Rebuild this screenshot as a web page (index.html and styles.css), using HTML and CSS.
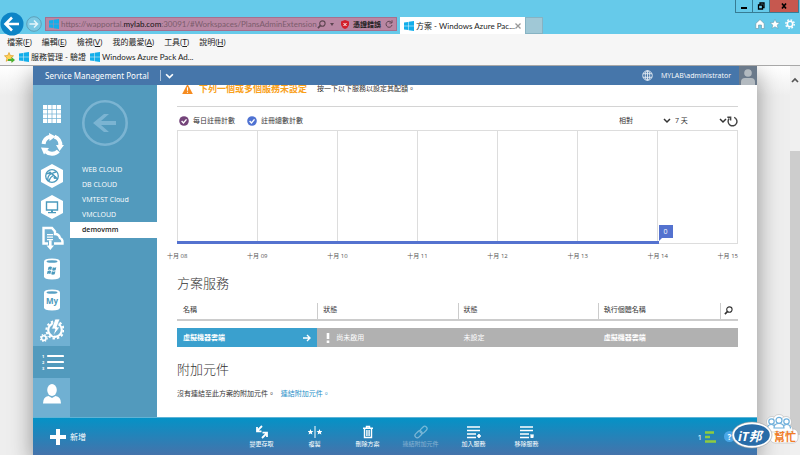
FILE: index.html
```html
<!DOCTYPE html>
<html lang="zh-Hant">

<head>
    <meta charset="UTF-8">
    <title>方案 - Windows Azure Pack</title>
    <link rel="stylesheet" href="styles.css">
</head>

<body>
    <svg class="defs" aria-hidden="true">
        <symbol id="win" viewBox="0 0 20 20">
            <path fill="#12aeea" d="M0 3l8.500-1.200v7.700H0zM9.500 1.600L20 0v9.500H9.500zM0 10.500h8.500v7.700L0 17zM9.500 10.500H20V20L9.500 18.400z" />
        </symbol>
        <symbol id="chevron" viewBox="0 0 8 6">
            <path d="M1 1l3 3 3-3" fill="none" stroke="currentColor" stroke-width="1.500" />
        </symbol>
        <symbol id="search" viewBox="0 0 10 10">
            <circle cx="6" cy="4" r="3" fill="none" stroke="currentColor" stroke-width="1.200" />
            <path d="M4 6L1 9" stroke="currentColor" stroke-width="1.800" />
        </symbol>
    </svg>

    <header class="browser">
        <div class="titlebar">
            <button class="round back" aria-label="上一頁">
                <svg viewBox="0 0 24 24"><circle cx="12" cy="12" r="11.500" fill="#0c84c6" /><path d="M19 12H6M12 5.500L5.500 12l6.500 6.500" fill="none" stroke="#fff" stroke-width="2.600" /></svg>
            </button>
            <button class="round forward" aria-label="下一頁">
                <svg viewBox="0 0 16 16"><circle cx="8" cy="8" r="7.300" fill="#7bc9e4" stroke="#5d9fb8" /><path d="M3.500 8h8M8 4.500L11.500 8 8 11.500" fill="none" stroke="#e6f6fb" stroke-width="1.500" /></svg>
            </button>
            <div class="address">
                <svg class="logo"><use href="#win" /></svg>
                <div class="url" role="textbox" contenteditable="true" aria-label="網址">https://wapportal.<span class="domain">mylab.com</span>:30091/#Workspaces/PlansAdminExtension</div>
                <svg class="find"><use href="#search" /></svg>
                <svg class="caret" viewBox="0 0 4 3"><path d="M0 0h4L2 3z" fill="#5e4552" /></svg>
                <svg class="shield" viewBox="0 0 8 9"><path d="M4 0l4 1.500V5Q7 8 4 9 1 8 0 5V1.500z" fill="#d3202c" /><path d="M2.500 3l3 3M5.500 3l-3 3" stroke="#fff" /></svg>
                <span class="cert">憑證錯誤</span>
                <svg class="reload" viewBox="0 0 8 8"><path d="M6.500 2.500A3 3 0 1 0 7 5M7 .3v2.700H4.300" fill="none" stroke="#5e4552" /></svg>
            </div>
            <div class="tab">
                <svg class="logo"><use href="#win" /></svg>
                <span class="tab-title">方案 - Windows Azure Pac...</span>
                <button class="tab-close" aria-label="關閉索引標籤">
                    <svg viewBox="0 0 6 6"><path d="M.5.5l5 5M5.500.5l-5 5" stroke="#999" stroke-width="1.300" /></svg>
                </button>
            </div>
            <button class="new-tab" aria-label="新索引標籤"></button>
            <div class="window-side">
                <div class="window-controls">
                    <button class="minimize" aria-label="最小化"><svg viewBox="0 0 8 8"><path d="M1 5h6v2H1z" /></svg></button>
                    <button class="restore" aria-label="還原"><svg viewBox="0 0 8 8"><path d="M3 2.500V1h4v4.500H6M1.500 3h4v4h-4z" fill="none" stroke="#000" stroke-width="1.300" /></svg></button>
                    <button class="close" aria-label="關閉"><svg viewBox="0 0 8 8"><path d="M2 1.500l4 5M6 1.500l-4 5" stroke="#000" stroke-width="1.600" /></svg></button>
                </div>
                <div class="browser-tools">
                    <button aria-label="首頁"><svg viewBox="0 0 10 10"><path d="M5 .5L.8 4.500V9.500h2.700V6h3v3.500h2.700v-5z" fill="#fff" stroke="#6694a4" stroke-width=".6" /></svg></button>
                    <button aria-label="我的最愛"><svg viewBox="0 0 10 10"><path d="M5 .2l1.400 3.200 3.400.3-2.600 2.300.8 3.500L5 7.700 2 9.500l.8-3.500L.2 3.700l3.400-.3z" fill="#fff" stroke="#6694a4" stroke-width=".5" /></svg></button>
                    <button aria-label="工具"><svg viewBox="0 0 10 10"><circle cx="5" cy="5" r="4.200" fill="none" stroke="#fff" stroke-width="1.400" stroke-dasharray="1.700 1.600" /><circle cx="5" cy="5" r="2.700" fill="none" stroke="#fff" stroke-width="1.600" /></svg></button>
                </div>
            </div>
        </div>
        <nav class="menu">
            <a href="#">檔案(<u>F</u>)</a>
            <a href="#">編輯(<u>E</u>)</a>
            <a href="#">檢視(<u>V</u>)</a>
            <a href="#">我的最愛(<u>A</u>)</a>
            <a href="#">工具(<u>T</u>)</a>
            <a href="#">說明(<u>H</u>)</a>
        </nav>
        <nav class="favorites">
            <button class="add-favorite" aria-label="加到我的最愛列">
                <svg viewBox="0 0 11 11"><path d="M5 .5l1.300 3 3.200.3L7 6l.8 3.300L5 7.600 2.200 9.300 3 6 .5 3.800l3.200-.3z" fill="#ffd257" stroke="#dc9b23" stroke-width=".7" /><path d="M4 7h3.500V5L11 8l-3.500 3V9H4z" fill="#4bb233" /></svg>
            </button>
            <a href="#"><svg class="logo"><use href="#win" /></svg>服務管理 - 驗證</a>
            <a href="#"><svg class="logo"><use href="#win" /></svg>Windows Azure Pack Ad...</a>
        </nav>
    </header>

    <div class="viewport">
        <div class="page">
            <div class="portal">
                <header class="portal-header">
                    <h1>Service Management Portal</h1>
                    <button class="portal-menu" aria-label="展開"><svg><use href="#chevron" /></svg></button>
                    <button class="language" aria-label="語言">
                        <svg viewBox="0 0 11 11"><g fill="none" stroke="#e4ecf4" stroke-width=".9"><circle cx="5.500" cy="5.500" r="4.800" /><ellipse cx="5.500" cy="5.500" rx="2.200" ry="4.800" /><path d="M5.500.7v9.600M1 3.700h9M1 7.300h9" /></g></svg>
                    </button>
                    <span class="user">MYLAB\administrator</span>
                    <svg class="avatar" viewBox="0 0 18 19"><path fill="#6b7a8b" d="M0 0h18v19H0z" /><circle cx="9" cy="7" r="3.800" fill="#b3bac0" /><path d="M2 19v-3q0-4 4-4h6q4 0 4 4v3z" fill="#b3bac0" /></svg>
                </header>

                <div class="portal-body">
                    <nav class="services">
                        <a href="#" aria-label="所有項目"><svg viewBox="0 0 24 24"><path d="M3 3h18v18H3z" fill="#fff" /><path d="M7.500 3v18M12 3v18M16.500 3v18M3 7.500h18M3 12h18M3 16.500h18" stroke="#70b0d2" stroke-width=".7" /></svg></a>
                        <a href="#" aria-label="雲端"><svg viewBox="0 0 24 24"><g fill="none" stroke="#fff" stroke-width="4"><path d="M3.600 11A8.600 8.600 0 0 1 10 3.600" /><path d="M14.500 3.700A8.600 8.600 0 0 1 20.300 13" /><path d="M18.300 18A8.600 8.600 0 0 1 6 18.500" /></g><path d="M9 0l6.500 3.600L9.500 8zM16 12h8l-4.500 6zM1 14.500l8 .5-5 6.500z" fill="#fff" /></svg></a>
                        <a href="#" aria-label="網站"><svg viewBox="0 0 24 24"><path d="M12 0l11 6v12l-11 6L1 18V6z" fill="#fff" /><g fill="none" stroke="#4b9abd" stroke-width="1.300"><circle cx="12" cy="12" r="6.300" /><path d="M6 10q5-2 8 1.500T18 15M8 17q-1-5 3-7t5-2M14 11q-4 2-5 6" /></g><circle cx="10" cy="9" r="1.500" fill="#4b9abd" /><circle cx="15" cy="13.500" r="1.500" fill="#4b9abd" /></svg></a>
                        <a href="#" aria-label="虛擬機器"><svg viewBox="0 0 24 24"><path d="M12 0l11 6v12l-11 6L1 18V6z" fill="#fff" /><path d="M6.500 7h11v8h-11z" fill="none" stroke="#4b9abd" stroke-width="1.400" /><path d="M11 15h2v2h3v1.200H8V17h3z" fill="#4b9abd" /></svg></a>
                        <a href="#" aria-label="自動化"><svg viewBox="0 0 24 24"><path d="M8 17.500H3.500V2H12l3 3.500V8q4 0 5 4 2.500 1 2.500 4v1.500H14" fill="none" stroke="#fff" stroke-width="2.400" /><path d="M7 8h6v1.300H7zM7 10.500h6v1.300H7zM7 13h6v1.300H7zM9 14.500h2.600v5H14L10.300 24l-3.800-4.500H9z" fill="#fff" /></svg></a>
                        <a href="#" aria-label="SQL Server"><svg viewBox="0 0 24 24"><path d="M4 4.500q0-3 8-3t8 3v15q0 3-8 3t-8-3z" fill="#fff" /><ellipse cx="12" cy="4.500" rx="5.500" ry="1.300" fill="#57a0c4" /><path d="M8.500 10q2-1.200 3.500 0l-.7 3q-1.800-1-3.500 0zM12.800 10.300q1.600.8 3.500 0l-.7 3q-1.900.8-3.500 0zM7.600 14q2-1.200 3.500 0l-.7 3q-1.800-1-3.500 0zM11.900 14.300q1.600.8 3.500 0l-.7 3q-1.900.8-3.500 0z" fill="#4b9abd" /></svg></a>
                        <a href="#" aria-label="MySQL"><svg viewBox="0 0 24 24"><path d="M4 4.500q0-3 8-3t8 3v15q0 3-8 3t-8-3z" fill="#fff" /><ellipse cx="12" cy="4.500" rx="5.500" ry="1.300" fill="#57a0c4" /><text x="12" y="16" class="mysql">My</text></svg></a>
                        <a href="#" aria-label="作業"><svg viewBox="0 0 24 24"><g fill="none" stroke="#fff"><circle cx="15" cy="11" r="6.800" stroke-width="2.200" /><circle cx="15" cy="11" r="8.600" stroke-width="2" stroke-dasharray="2.400 2.100" /><circle cx="3.800" cy="19" r="2.300" stroke-width="1.600" /><circle cx="3.800" cy="19" r="3.400" stroke-width="1.200" stroke-dasharray="1.500 1.200" /></g><path d="M15 0h5l-3 8h3l-7 9 2-7h-3.500z" fill="#fff" stroke="#70b0d2" stroke-width=".8" /></svg></a>
                        <a href="#" class="active" aria-label="方案"><svg viewBox="0 0 24 24"><path d="M8 6h15M8 12h15M8 18h15" stroke="#fff" stroke-width="2.200" stroke-linecap="round" /><g class="digits"><text x="2" y="8">1</text><text x="2" y="14">2</text><text x="2" y="20">3</text></g></svg></a>
                        <a href="#" aria-label="使用者帳戶"><svg viewBox="0 0 24 24"><ellipse cx="12" cy="8" rx="4.800" ry="6" fill="#fff" /><path d="M3 21.500q0-7 5.500-7.500l3.500 2 3.500-2q5.500.5 5.500 7.500z" fill="#fff" /></svg></a>
                    </nav>

                    <nav class="plans">
                        <button class="plans-back" aria-label="返回">
                            <svg viewBox="0 0 46 46"><circle cx="23" cy="23" r="21.700" fill="none" stroke="currentColor" stroke-width="2.600" /><path d="M11 23l11-9h5l-8 7h15v4H19l8 7h-5z" fill="currentColor" /></svg>
                        </button>
                        <a href="#">WEB CLOUD</a>
                        <a href="#">DB CLOUD</a>
                        <a href="#">VMTEST Cloud</a>
                        <a href="#">VMCLOUD</a>
                        <a href="#" class="active">demovmm</a>
                    </nav>

                    <main class="content">
                        <div class="warning">
                            <svg viewBox="0 0 12 12"><path d="M6 .5L11.800 11.500H.2z" fill="#f68b1f" /><path d="M5.400 4h1.200v4H5.400zM5.400 9h1.200v1.200H5.400z" fill="#fff" /></svg>
                            <strong>下列一個或多個服務未設定</strong>
                            <span>按一下以下服務以設定其配額。</span>
                        </div>

                        <div class="chart-bar">
                            <button class="legend daily"><svg viewBox="0 0 10 10"><circle cx="5" cy="5" r="4.800" fill="currentColor" /><path d="M2.600 5l1.900 2 3-3.600" fill="none" stroke="#fff" stroke-width="1.400" /></svg><span>每日註冊計數</span></button>
                            <button class="legend total"><svg viewBox="0 0 10 10"><circle cx="5" cy="5" r="4.800" fill="currentColor" /><path d="M2.600 5l1.900 2 3-3.600" fill="none" stroke="#fff" stroke-width="1.400" /></svg><span>註冊總數計數</span></button>
                            <div class="chart-options">
                                <label class="picker"><select aria-label="刻度"><option>相對</option></select><svg><use href="#chevron" /></svg></label>
                                <label class="picker"><select aria-label="期間"><option>7 天</option></select><svg><use href="#chevron" /></svg></label>
                                <button class="refresh" aria-label="重新整理"><svg viewBox="0 0 10 10"><path d="M6.500 1.200A4 4 0 1 1 2 2.300M.3 1.200h3v3" fill="none" stroke="#444" stroke-width="1.300" /></svg></button>
                            </div>
                        </div>

                        <div class="chart">
                            <i></i><i></i><i></i><i></i><i></i><i></i><i></i>
                            <div class="series"><span class="value">0</span></div>
                        </div>
                        <div class="axis">
                            <span>十月 08</span><span>十月 09</span><span>十月 10</span><span>十月 11</span><span>十月 12</span><span>十月 13</span><span>十月 14</span><span>十月 15</span>
                        </div>

                        <h2>方案服務</h2>
                        <table>
                            <thead>
                                <tr>
                                    <th>名稱</th>
                                    <th>狀態</th>
                                    <th>狀態</th>
                                    <th>執行個體名稱</th>
                                    <th class="search-cell"><button aria-label="搜尋"><svg><use href="#search" /></svg></button></th>
                                </tr>
                            </thead>
                            <tbody>
                                <tr>
                                    <td class="name"><a href="#">虛擬機器雲端<svg viewBox="0 0 8 8"><path d="M0 4h7M4 1l3 3-3 3" fill="none" stroke="#fff" stroke-width="1.400" /></svg></a></td>
                                    <td><span class="state"><svg viewBox="0 0 4 10"><path d="M.7 0h2.600v6H.7zM.7 7.500h2.600V10H.7z" fill="#fff" /></svg>尚未啟用</span></td>
                                    <td>未設定</td>
                                    <td colspan="2" class="instance">虛擬機器雲端</td>
                                </tr>
                            </tbody>
                        </table>

                        <h2>附加元件</h2>
                        <p>沒有連結至此方案的附加元件。 <a href="#">連結附加元件。</a></p>
                    </main>
                </div>

                <footer class="commands">
                    <button class="new"><svg viewBox="0 0 16 16"><path d="M6 0h4v6h6v4h-6v6H6v-6H0V6h6z" fill="#fff" /></svg>新增</button>
                    <div class="actions">
                        <button><svg viewBox="0 0 14 14"><path d="M1.500 1.500L6 6M6.500 2v4.500H2M12.500 12.500L8 8" fill="none" stroke="none" /><path d="M7 1L2 6M2 2v4.300h4.500M7 13l5-5M12 12V7.700H7.500" fill="none" stroke="#fff" stroke-width="1.800" /></svg>變更存取</button>
                        <button><svg viewBox="0 0 14 14"><path d="M7 1v12" stroke="#fff" /><path d="M2.500 4l.8 2 2.200.1-1.700 1.400.6 2.100-1.900-1.200L.6 9.600l.6-2.100L-.5 6.100 1.700 6zM11.500 4l.8 2 2.200.1-1.700 1.400.6 2.100-1.900-1.200-1.900 1.200.6-2.100-1.700-1.400 2.200-.1z" fill="#fff" /></svg>複製</button>
                        <button><svg viewBox="0 0 14 14"><path d="M2 3.200h10M5.500 3V1.500h3V3M3.500 4v8.500h7V4M5.900 5v6M8.100 5v6" fill="none" stroke="#fff" stroke-width="1.400" /></svg>刪除方案</button>
                        <button disabled><svg viewBox="0 0 14 14"><g fill="none" stroke="#fff" stroke-width="1.300"><rect x="5.500" y="2.500" width="8" height="4.600" rx="2.300" transform="rotate(-45 9.500 4.800)" /><rect x=".5" y="7" width="8" height="4.600" rx="2.300" transform="rotate(-45 4.500 9.300)" /></g></svg>連結附加元件</button>
                        <button><svg viewBox="0 0 14 14"><path d="M0 2h13M0 5.500h13M0 9h9M0 12.500h9M12 9v4M10 11h4" stroke="#fff" stroke-width="1.700" /></svg>加入服務</button>
                        <button><svg viewBox="0 0 14 14"><path d="M0 2h13M0 5.500h13M0 9h9M0 12.500h9M10.500 9.500l3 3M13.500 9.500l-3 3" stroke="#fff" stroke-width="1.700" /></svg>移除服務</button>
                    </div>
                    <button class="progress">1<svg viewBox="0 0 12 12"><path d="M1 1.500h9M1 6h5M1 10.500h11" stroke="#8fcb3f" stroke-width="2.400" /></svg></button>
                    <button class="help" aria-label="說明">?</button>
                </footer>
            </div>
        </div>
        <div class="scrollbar">
            <svg viewBox="0 0 8 6"><path d="M1 5l3-3 3 3" fill="none" stroke="#555" stroke-width="1.700" /></svg>
            <div class="thumb"></div>
        </div>
    </div>

    <svg class="watermark" viewBox="0 0 68 36" role="img" aria-label="iT邦幫忙">
        <g stroke="#aaa" stroke-width=".5" fill="#fff"><rect x="38" y="15" width="28" height="14" rx="5" /><circle cx="40" cy="8" r="5.500" /><circle cx="47" cy="6.500" r="6" /><circle cx="54" cy="8" r="5.500" /><path d="M34 18q0-7 5-7h17q5 0 5 7z" /></g>
        <g fill="#fff" stroke="#6fb0dc" stroke-width="1.200"><circle cx="39.500" cy="7.500" r="2.700" /><circle cx="54.500" cy="7.500" r="2.700" /><path d="M35.500 14.500q0-4 4-4 3 0 3.500 3M51 13.500q.5-3 3.500-3 4 0 4 4" /><circle cx="47" cy="6.300" r="3" /><path d="M42 14q0-4.500 5-4.500t5 4.500z" /></g>
        <ellipse cx="20" cy="21" rx="20" ry="13" fill="#fff" stroke="#999" stroke-width=".6" />
        <ellipse cx="20" cy="21" rx="17.800" ry="10.800" fill="#286ca8" />
        <text x="6" y="27" class="mark-it">iT邦</text>
        <text x="42" y="27" class="mark-help">幫忙</text>
    </svg>
</body>

</html>
```
FILE: styles.css
```css
* {
    box-sizing: border-box;
}

body {
    margin: 0;
    height: 100vh;
    display: flex;
    flex-direction: column;
    overflow: hidden;
    font-family: "Open Sans", "Noto Sans CJK TC", sans-serif;
    font-size: 7px;
    line-height: 10px;
    color: #333;
}

button,
select {
    font: inherit;
    color: inherit;
    background: none;
    border: none;
    padding: 0;
    margin: 0;
    cursor: pointer;
}

a {
    color: inherit;
    text-decoration: none;
}

svg {
    display: block;
    flex: none;
}

.defs {
    display: none;
}

/* Browser */
.browser {
    flex: none;
    background: #f6f6f6;
    border-bottom: 1px solid #a8a8a8;
    font-family: Lato, "Noto Sans CJK TC", sans-serif;
    font-size: 8px;
    color: #222;
}

.titlebar {
    display: flex;
    align-items: flex-end;
    height: 34px;
    background: #66caea;
}

.round {
    flex: none;
    align-self: flex-end;
}

.back {
    width: 24px;
    height: 24px;
    margin-bottom: -2px;
}

.back svg {
    width: 24px;
    height: 24px;
}

.forward {
    width: 16px;
    height: 16px;
    margin: 0 3px 2px 2px;
}

.logo {
    width: 10px;
    height: 10px;
}

.address {
    display: flex;
    align-items: center;
    flex: 0 1 352px;
    height: 14px;
    margin-bottom: 3px;
    padding: 0 3px;
    background: #b987a3;
    border: 1px solid #a5708e;
}

.url {
    flex: 1;
    margin-left: 2px;
    white-space: nowrap;
    overflow: hidden;
    color: #7b5c6c;
}

.domain {
    color: #111;
}

.find {
    width: 9px;
    height: 9px;
    color: #5e4552;
}

.caret {
    width: 4px;
    height: 3px;
    margin: 0 7px 0 4px;
}

.shield {
    width: 8px;
    height: 9px;
}

.cert {
    margin: 0 4px;
    font-size: 7px;
    font-weight: bold;
}

.reload {
    width: 8px;
    height: 8px;
}

.tab {
    display: flex;
    align-items: center;
    flex: 0 1 124px;
    height: 17px;
    margin-left: 3px;
    padding: 0 4px;
    background: #fff;
}

.tab-title {
    flex: 1;
    margin-left: 2px;
    white-space: nowrap;
}

.tab-close svg {
    width: 6px;
    height: 6px;
}

.new-tab {
    width: 18px;
    height: 17px;
    background: #a0c8d6;
    border: 1px solid #86b3c3;
}

.window-side {
    display: flex;
    flex-direction: column;
    justify-content: space-between;
    align-items: flex-end;
    align-self: stretch;
    margin-left: auto;
    padding: 0 1px 5px 0;
}

.window-controls {
    display: flex;
    border: 1px solid #377c94;
    border-top: none;
}

.window-controls button {
    display: flex;
    justify-content: center;
    align-items: center;
    width: 17px;
    height: 12px;
    border-right: 1px solid #377c94;
}

.window-controls svg {
    width: 8px;
    height: 8px;
}

.window-controls .close {
    width: 28px;
    background: #c6584f;
    border: none;
}

.browser-tools {
    display: flex;
    gap: 5px;
    padding-right: 4px;
}

.browser-tools svg {
    width: 10px;
    height: 10px;
}

.menu,
.favorites {
    display: flex;
    align-items: center;
    height: 15px;
}

.menu {
    gap: 10px;
    padding-left: 7px;
}

.favorites {
    gap: 4px;
    height: 16px;
    padding-left: 4px;
}

.favorites a {
    display: flex;
    align-items: center;
    gap: 2px;
}

.add-favorite svg {
    width: 11px;
    height: 11px;
}

/* Page area */
.viewport {
    display: flex;
    flex: 1;
    min-height: 0;
    background: linear-gradient(#fff, #eee 30px);
}

.page {
    flex: 1;
    display: flex;
    padding: 0 33px;
    overflow: hidden;
}

.portal {
    flex: 1;
    display: flex;
    flex-direction: column;
    background: #fff;
    box-shadow: 0 8px 22px rgba(0, 0, 0, 0.4);
}

.scrollbar {
    width: 10px;
    display: flex;
    flex-direction: column;
    padding: 11px 0 20px;
    background: #f0f0f0;
}

.scrollbar svg {
    width: 8px;
    height: 6px;
    margin-left: 1px;
}

.thumb {
    flex: 1;
    margin-top: 68px;
    background: #cdcdcd;
}

.portal-header {
    display: flex;
    align-items: center;
    flex: none;
    height: 19px;
    padding-left: 12px;
    background: #4676aa;
    color: #fff;
}

.portal-header h1 {
    margin: 0;
    font-family: "Noto Sans", sans-serif;
    font-size: 8px;
    font-weight: normal;
}

.portal-menu {
    margin-left: 11px;
    padding: 3px 0 1px 4px;
    border-left: 1px solid #a9c0d9;
}

.portal-menu svg {
    width: 9px;
    height: 7px;
}

.language {
    margin-left: auto;
}

.language svg {
    width: 11px;
    height: 11px;
}

.user {
    margin: 0 8px;
}

.avatar {
    width: 18px;
    height: 19px;
}

.portal-body {
    flex: 1;
    display: flex;
    min-height: 0;
    overflow: hidden;
}

.services {
    flex: none;
    width: 37px;
    padding-top: 13px;
    background: #70b0d2;
}

.services a {
    display: flex;
    justify-content: center;
    align-items: center;
    height: 31px;
}

.services .active {
    height: 32px;
    background: #529abd;
}

.services svg {
    width: 24px;
    height: 24px;
}

.mysql {
    font-size: 8px;
    font-weight: bold;
    text-anchor: middle;
    fill: #4b9abd;
}

.digits {
    font-size: 4px;
    font-weight: bold;
    fill: #fff;
}

.plans {
    flex: none;
    display: flex;
    flex-direction: column;
    width: 87px;
    padding-top: 15px;
    background: #529abd;
    color: #fff;
}

.plans-back {
    align-self: flex-start;
    margin: 0 0 16px 12px;
    color: #7bb4d2;
}

.plans-back svg {
    width: 46px;
    height: 46px;
}

.plans a {
    padding-left: 12px;
    line-height: 15px;
}

.plans .active {
    background: #fff;
    color: #222;
    font-weight: 600;
    line-height: 16px;
}

/* Content */
.content {
    flex: 1;
    padding: 0 19px 0 20px;
}

.warning {
    display: flex;
    align-items: center;
    height: 28px;
    margin-top: -6px;
    padding: 0 0 8px 5px;
    border-bottom: 1px solid #d4d4d4;
}

.warning svg {
    width: 11px;
    height: 12px;
}

.warning strong {
    margin: 0 10px 0 6px;
    font-size: 9px;
    color: #f9a11b;
}

.chart-bar {
    display: flex;
    align-items: center;
    height: 23px;
    padding: 5px 0 0 2px;
}

.legend {
    display: flex;
    align-items: center;
    gap: 4px;
    margin-right: 12px;
}

.legend svg {
    width: 10px;
    height: 10px;
}

.legend span {
    color: #333;
}

.daily {
    color: #74447a;
}

.total {
    color: #4f72d2;
}

.chart-options {
    display: flex;
    align-items: center;
    gap: 4px;
    margin-left: auto;
}

.picker {
    display: flex;
    align-items: center;
}

.picker select {
    width: 44px;
    appearance: none;
}

.picker svg {
    width: 8px;
    height: 6px;
}

.refresh {
    margin-left: -4px;
}

.refresh svg {
    width: 11px;
    height: 11px;
}

.chart {
    position: relative;
    display: grid;
    grid-template-columns: repeat(7, 1fr);
    height: 114px;
    border: 1px solid #ddd;
    border-left: none;
}

.chart i {
    border-left: 1px solid #ddd;
}

.series {
    position: absolute;
    left: 0;
    bottom: -1px;
    width: 86%;
    height: 3px;
    background: #5472cf;
}

.value {
    position: absolute;
    left: 100%;
    bottom: 6px;
    width: 14px;
    background: #5472cf;
    color: #fff;
    line-height: 13px;
    text-align: center;
}

.value::after {
    content: "";
    position: absolute;
    left: 0;
    top: 100%;
    border-top: 3px solid #5472cf;
    border-right: 3px solid transparent;
}

.axis {
    display: grid;
    grid-template-columns: repeat(6, 8fr) 7fr 2fr;
    margin: 7px 0 0 -10px;
    font-size: 6px;
    color: #555;
    white-space: nowrap;
}

h2 {
    margin: 13px 0 11px;
    font-size: 13px;
    font-weight: 300;
    line-height: 18px;
}

table {
    width: 100%;
    table-layout: fixed;
    border-spacing: 0;
}

th {
    height: 18px;
    padding: 0 0 2px 6px;
    border-bottom: 2px solid #ccc;
    background: linear-gradient(#ccc, #ccc) left / 1px 100% no-repeat;
    font-weight: normal;
    text-align: left;
}

th:first-child {
    background: none;
}

th:nth-child(-n+3) {
    width: 25%;
}

.search-cell {
    width: 18px;
    padding: 2px 0 0 4px;
}

.search-cell svg {
    width: 9px;
    height: 9px;
}

tbody::before {
    content: "";
    display: block;
    height: 7px;
}

td {
    height: 19px;
    padding: 0 6px;
    background: #b1b1b1;
    color: #fff;
}

.name {
    background: #3aa0ce;
    font-weight: bold;
}

.name a {
    display: flex;
    justify-content: space-between;
    align-items: center;
}

.name svg {
    width: 8px;
    height: 8px;
}

.state {
    display: flex;
    align-items: center;
    gap: 6px;
    padding-left: 3px;
}

.state svg {
    width: 4px;
    height: 10px;
}

.instance {
    font-weight: bold;
}

p {
    margin: 0;
}

p a {
    margin-left: 4px;
    color: #1f8fc8;
}

/* Command bar */
.commands {
    flex: none;
    display: flex;
    align-items: center;
    height: 38px;
    padding: 0 22px 0 17px;
    background: linear-gradient(#0592c6, #4573ab);
    border-top: 1px solid #5fb3d6;
    color: #fff;
}

.new {
    display: flex;
    align-items: center;
    gap: 4px;
    width: 185px;
    font-size: 8px;
}

.new svg {
    width: 16px;
    height: 16px;
}

.actions {
    display: flex;
}

.actions button {
    display: flex;
    flex-direction: column;
    align-items: center;
    width: 53px;
    font-size: 6px;
}

.actions svg {
    width: 14px;
    height: 14px;
}

.actions button:disabled {
    opacity: 0.4;
}

.progress {
    display: flex;
    align-items: center;
    gap: 2px;
    margin: 0 8px 0 auto;
    font-size: 8px;
}

.progress svg {
    width: 12px;
    height: 12px;
}

.help {
    width: 11px;
    height: 11px;
    border-radius: 50%;
    background: #4aa7e8;
    font-size: 8px;
    font-weight: bold;
    line-height: 11px;
}

.watermark {
    position: absolute;
    right: 0;
    bottom: 5px;
    width: 68px;
    height: 36px;
}

.mark-it {
    font-size: 13px;
    font-style: italic;
    font-weight: bold;
    fill: #fff;
}

.mark-help {
    font-size: 11px;
    font-weight: bold;
    fill: #f07c28;
}
```
